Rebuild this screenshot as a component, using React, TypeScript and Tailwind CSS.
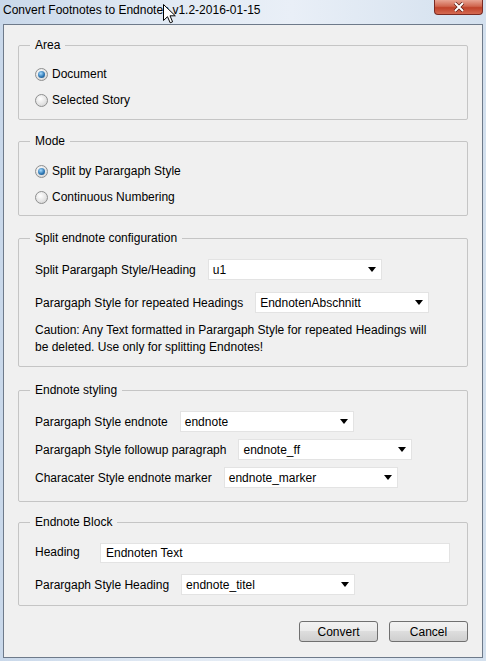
import type { ReactNode } from 'react';

const font = "font-['Liberation_Sans',Arial,sans-serif]";

function Radio({ checked, label }: { checked?: boolean; label: string }) {
  return (
    <div className="h-[26px] flex items-center">
      <span className="w-[13px] h-[13px] rounded-full border border-[#8e8f8f] bg-[radial-gradient(circle_at_40%_35%,#ffffff,#e2e2e2_60%,#c9c9c9)] flex items-center justify-center">
        {checked && (
          <span className="w-[7px] h-[7px] rounded-full bg-[radial-gradient(circle_at_40%_35%,#a8dcff,#2f78b4_55%,#1b4a78)]" />
        )}
      </span>
      <span className="ml-[4px] text-[12px] leading-[14px]">{label}</span>
    </div>
  );
}

function Select({ value }: { value: string }) {
  return (
    <div className="w-[174px] h-[21px] bg-white border border-[#e3e3e3] flex items-center justify-between pl-[4px] pr-[5px]">
      <span className="text-[12px] leading-[14px]">{value}</span>
      <svg width="8" height="5" viewBox="0 0 8 5">
        <path d="M0 0H8L4 5Z" fill="#000" />
      </svg>
    </div>
  );
}

function Field({ label, value, className = '' }: { label: string; value: string; className?: string }) {
  return (
    <div className={`flex items-center gap-[12px] ${className}`}>
      <span className="text-[12px] leading-[14px]">{label}</span>
      <Select value={value} />
    </div>
  );
}

function Group({ title, className = '', children }: { title: string; className?: string; children: ReactNode }) {
  return (
    <fieldset className={`w-[450px] border border-[#c5c5c5] rounded-[2px] ${className}`}>
      <legend className="ml-[11px] px-[5px] text-[12px] leading-[14px]">{title}</legend>
      {children}
    </fieldset>
  );
}

function Button({ children }: { children: ReactNode }) {
  return (
    <button className="w-[79px] h-[21px] rounded-[3px] border border-[#707070] bg-[linear-gradient(#f2f2f2,#ebebeb_45%,#dddddd_50%,#cfcfcf)] text-[12px] leading-[14px] text-black">
      {children}
    </button>
  );
}

export default function App() {
  return (
    <div className={`relative w-[486px] h-[661px] flex flex-col bg-[linear-gradient(90deg,#c9d8ea,#dfe8f3_30%,#e9eff7_60%,#d3e0ee)] text-black ${font}`}>
      {/* Title bar */}
      <div className="h-[24px] flex items-start justify-between pl-[3px]">
        <span className="mt-[3px] text-[12px] leading-[15px]">Convert Footnotes to Endnotes v1.2-2016-01-15</span>
        <div className="mr-[3px] w-[49px] h-[15px] rounded-b-[4px] border border-t-0 border-[#7a2a22] bg-[linear-gradient(#e8a493,#d0664f_45%,#c0422a_55%,#d46a52)] flex items-center justify-center">
          <svg width="12" height="10" viewBox="0 0 12 10">
            <path d="M2 1L10 9M10 1L2 9" stroke="#5a1a12" strokeWidth="3.4" />
            <path d="M2 1L10 9M10 1L2 9" stroke="#fff" strokeWidth="2" />
          </svg>
        </div>
      </div>

      {/* Client area */}
      <div className="mx-[3px] h-[634px] border border-[#6e7a8a] bg-[#f0f0f0] pl-[14px] flex flex-col">
        <Group title="Area" className="mt-[13px]">
          <div className="pl-[16px] pt-[9px] pb-[6px]">
            <Radio checked label="Document" />
            <Radio label="Selected Story" />
          </div>
        </Group>

        <Group title="Mode" className="mt-[14px]">
          <div className="pl-[16px] pt-[10px] pb-[5px]">
            <Radio checked label="Split by Parargaph Style" />
            <Radio label="Continuous Numbering" />
          </div>
        </Group>

        <Group title="Split endnote configuration" className="mt-[15px]">
          <div className="pl-[16px] pt-[14px] pb-[10px]">
            <Field label="Split Parargaph Style/Heading" value="u1" />
            <Field label="Parargaph Style for repeated Headings" value="EndnotenAbschnitt" className="mt-[12px]" />
            <p className="mt-[9px] text-[12px] leading-[17px]">
              Caution: Any Text formatted in Parargaph Style for repeated Headings will
              <br />
              be deleted. Use only for splitting Endnotes!
            </p>
          </div>
        </Group>

        <Group title="Endnote styling" className="mt-[16px]">
          <div className="pl-[16px] pt-[14px] pb-[13px] flex flex-col gap-[7px]">
            <Field label="Parargaph Style endnote" value="endnote" />
            <Field label="Parargaph Style followup paragraph" value="endnote_ff" />
            <Field label="Characater Style endnote marker" value="endnote_marker" />
          </div>
        </Group>

        <Group title="Endnote Block" className="mt-[13px]">
          <div className="pl-[16px] pt-[14px] pb-[10px]">
            <div className="flex items-start">
              <span className="w-[65px] mt-[2px] text-[12px] leading-[14px]">Heading</span>
              <div className="w-[350px] h-[20px] bg-white border border-[#e3e3e3] flex items-center pl-[5px]">
                <span className="text-[12px] leading-[14px]">Endnoten Text</span>
              </div>
            </div>
            <Field label="Parargaph Style Heading" value="endnote_titel" className="mt-[11px] gap-[10px]" />
          </div>
        </Group>

        <div className="w-[450px] mt-[15px] flex justify-end gap-[11px]">
          <Button>Convert</Button>
          <Button>Cancel</Button>
        </div>
      </div>

      {/* Mouse pointer over the title */}
      <svg className="absolute left-[163px] top-[4px]" width="13" height="20" viewBox="0 0 13 20">
        <path d="M0.5 0.5V16.5L4.5 12.7L7.2 18.8L9.6 17.8L7 11.8H12.3Z" fill="#fff" stroke="#000" strokeWidth="1" />
      </svg>
    </div>
  );
}
